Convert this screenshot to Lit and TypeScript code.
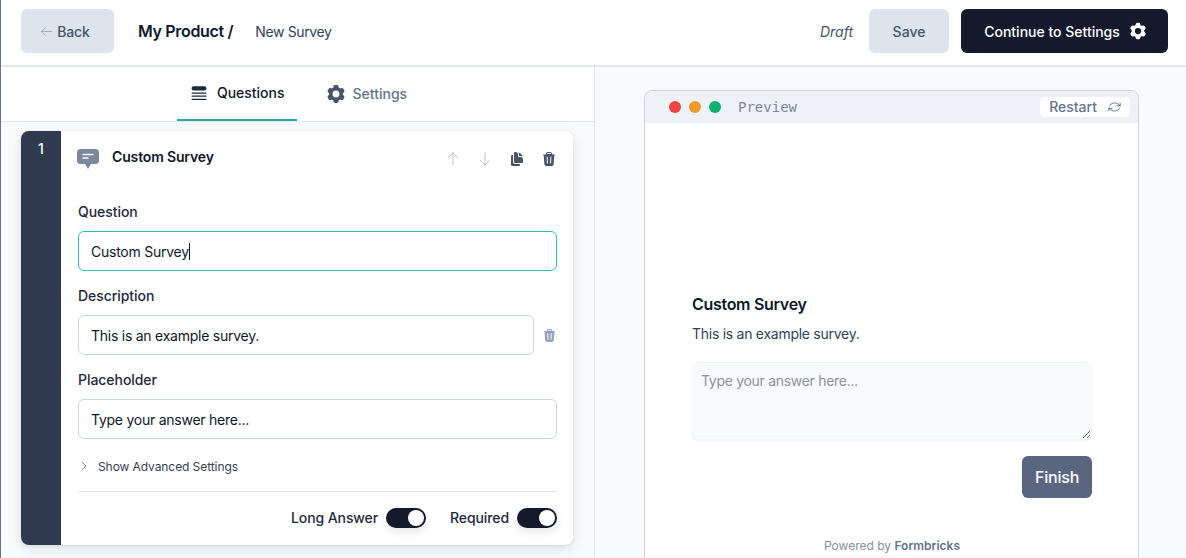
import { LitElement, html, css, svg } from "lit";
import { customElement } from "lit/decorators.js";

const solid = (paths: any, size: number, cls = "") => html`
    <svg class=${cls} width=${size} height=${size} viewBox="0 0 24 24" fill="currentColor">${paths}</svg>
`;
const outline = (d: string, size: number, width = 1.5, cls = "") => html`
    <svg class=${cls} width=${size} height=${size} viewBox="0 0 24 24" fill="none" stroke="currentColor"
        stroke-width=${width} stroke-linecap="round" stroke-linejoin="round">
        ${svg`<path d=${d}></path>`}
    </svg>
`;

const cog = svg`<path fill-rule="evenodd" clip-rule="evenodd" d="M11.078 2.25c-.917 0-1.699.663-1.85 1.567L9.05 4.889c-.02.12-.115.26-.297.348a7.493 7.493 0 00-.986.57c-.166.115-.334.126-.45.083L6.3 5.508a1.875 1.875 0 00-2.282.819l-.922 1.597a1.875 1.875 0 00.432 2.385l.84.692c.095.078.17.229.154.43a7.598 7.598 0 000 1.139c.015.2-.059.352-.153.43l-.841.692a1.875 1.875 0 00-.432 2.385l.922 1.597a1.875 1.875 0 002.282.818l1.019-.382c.115-.043.283-.031.45.082.312.214.641.405.985.57.182.088.277.228.297.35l.178 1.071c.151.904.933 1.567 1.85 1.567h1.844c.916 0 1.699-.663 1.85-1.567l.178-1.072c.02-.12.114-.26.297-.349.344-.165.673-.356.985-.57.167-.114.335-.125.45-.082l1.02.382a1.875 1.875 0 002.28-.819l.923-1.597a1.875 1.875 0 00-.432-2.385l-.84-.692c-.095-.078-.17-.229-.154-.43a7.614 7.614 0 000-1.139c-.016-.2.059-.352.153-.43l.84-.692c.708-.582.891-1.59.433-2.385l-.922-1.597a1.875 1.875 0 00-2.282-.818l-1.02.382c-.114.043-.282.031-.449-.083a7.49 7.49 0 00-.985-.57c-.183-.087-.277-.227-.297-.348l-.179-1.072a1.875 1.875 0 00-1.85-1.567h-1.843zM12 15.75a3.75 3.75 0 100-7.5 3.75 3.75 0 000 7.5z"></path>`;
const trash = svg`<path fill-rule="evenodd" clip-rule="evenodd" d="M16.5 4.478v.227a48.816 48.816 0 013.878.512.75.75 0 11-.256 1.478l-.209-.035-1.005 13.07a3 3 0 01-2.991 2.77H8.084a3 3 0 01-2.991-2.77L4.087 6.66l-.209.035a.75.75 0 01-.256-1.478A48.567 48.567 0 017.5 4.705v-.227c0-1.564 1.213-2.9 2.816-2.951a52.662 52.662 0 013.369 0c1.603.051 2.815 1.387 2.815 2.951zm-6.136-1.452a51.196 51.196 0 013.273 0C14.39 3.05 15 3.684 15 4.478v.113a49.488 49.488 0 00-6 0v-.113c0-.794.609-1.428 1.364-1.452zm-.355 5.945a.75.75 0 10-1.5.058l.347 9a.75.75 0 101.499-.058l-.346-9zm5.48.058a.75.75 0 10-1.498-.058l-.347 9a.75.75 0 001.5.058l.345-9z"></path>`;
const copy = svg`<path d="M7.5 3.375c0-1.036.84-1.875 1.875-1.875h.375a3.75 3.75 0 013.75 3.75v1.875C13.5 8.161 14.34 9 15.375 9h1.875A3.75 3.75 0 0121 12.75v3.375C21 17.16 20.16 18 19.125 18h-9.75A1.875 1.875 0 017.5 16.125V3.375z"></path><path d="M15 5.25a5.23 5.23 0 00-1.279-3.434 9.768 9.768 0 016.963 6.963A5.23 5.23 0 0017.25 7.5h-1.875A.375.375 0 0115 7.125V5.25zM4.875 6H6v10.125A3.375 3.375 0 009.375 19.5H16.5v1.125c0 1.035-.84 1.875-1.875 1.875h-9.75A1.875 1.875 0 013 20.625V7.875C3 6.839 3.84 6 4.875 6z"></path>`;
const queue = svg`<path d="M5.625 3.75a2.625 2.625 0 100 5.25h12.75a2.625 2.625 0 000-5.25H5.625zM3.75 11.25a.75.75 0 000 1.5h16.5a.75.75 0 000-1.5H3.75zM3 15.75a.75.75 0 01.75-.75h16.5a.75.75 0 010 1.5H3.75a.75.75 0 01-.75-.75zM3.75 18.75a.75.75 0 000 1.5h16.5a.75.75 0 000-1.5H3.75z"></path>`;

@customElement("app-root")
export class AppRoot extends LitElement {
    static styles = css`
        :host {
            display: flex;
            flex-direction: column;
            height: 558px;
            overflow: hidden;
            font-family: Inter, "Liberation Sans", sans-serif;
            color: #0f172a;
            background: #fff;
            border-left: 1px solid #64748b;
        }
        svg {
            display: block;
            flex: none;
        }
        .topbar {
            display: flex;
            align-items: center;
            padding: 9px 18px 12px 20px;
            border-bottom: 2px solid #e2e8f0;
            flex: none;
        }
        .btn {
            display: flex;
            align-items: center;
            justify-content: center;
            height: 44px;
            box-sizing: border-box;
            border-radius: 6px;
            font-size: 14px;
            font-weight: 500;
        }
        .btn.soft {
            background: #dde4ee;
            color: #475569;
        }
        .btn.dark {
            background: #141a2b;
            color: #fff;
            width: 207px;
            gap: 8px;
            margin-left: 12px;
            padding-left: 3px;
        }
        .back {
            width: 93px;
            gap: 4px;
            padding-right: 5px;
            letter-spacing: -0.1px;
        }
        .back svg {
            color: #94a3b8;
        }
        .save {
            width: 80px;
            margin-left: 16px;
        }
        .product {
            margin-left: 24px;
            font-size: 16px;
            font-weight: 600;
            letter-spacing: -0.33px;
        }
        .survey-name {
            margin-left: 22px;
            font-size: 14px;
            color: #334155;
            padding-top: 1px;
            letter-spacing: -0.38px;
        }
        .draft {
            margin-left: auto;
            font-size: 14px;
            font-style: italic;
            color: #475569;
        }
        .main {
            flex: 1;
            display: flex;
            min-height: 0;
        }
        .editor {
            width: 593px;
            flex: none;
            border-right: 1px solid #e2e8f0;
            background: #f8fafc;
        }
        .tabs {
            display: flex;
            justify-content: center;
            height: 54px;
            padding-left: 3px;
            background: #fff;
            border-bottom: 1px solid #e2e8f0;
        }
        .tab {
            display: flex;
            align-items: center;
            box-sizing: border-box;
            font-size: 14px;
            font-weight: 500;
            color: #64748b;
            border-bottom: 2px solid transparent;
        }
        .tab.active {
            gap: 8px;
            padding: 0 12px 1px 12px;
            color: #0f172a;
            border-bottom-color: #2ba8a0;
        }
        .tab.idle {
            gap: 6px;
            margin-left: 14px;
            padding: 1px 14px 0;
        }
        .tab svg {
            color: #475569;
        }
        .tab.active svg {
            color: #1e293b;
        }
        .card {
            display: flex;
            width: 552px;
            height: 414px;
            margin: 9px 0 0 20px;
            border-radius: 8px;
            overflow: hidden;
            background: #fff;
            box-shadow: 0 4px 12px rgba(15, 23, 42, 0.1), 0 1px 3px rgba(15, 23, 42, 0.08);
        }
        .index {
            width: 40px;
            flex: none;
            background: #2f3a4f;
            color: #fff;
            font-size: 14px;
            font-weight: 500;
            text-align: center;
            padding-top: 9px;
            box-sizing: border-box;
        }
        .body {
            flex: 1;
            padding: 0 16px 0 17px;
            min-width: 0;
        }
        .card-head {
            display: flex;
            align-items: center;
            height: 54px;
            margin-left: -1px;
        }
        .card-title {
            margin-left: 13px;
            font-size: 14px;
            font-weight: 600;
            margin-top: -3px;
            letter-spacing: -0.15px;
        }
        .tools {
            margin-left: auto;
            margin-top: 2px;
            display: flex;
            align-items: center;
            gap: 16px;
            color: #bcc6d3;
        }
        .tools .on {
            color: #475569;
        }
        .bubble {
            color: #7a879c;
            margin-top: 2px;
        }
        .label {
            font-size: 14px;
            font-weight: 500;
            line-height: 20px;
            color: #1e293b;
            margin-bottom: 9px;
            letter-spacing: -0.05px;
        }
        .label.first {
            margin-top: 17px;
        }
        .group {
            margin-bottom: 15px;
        }
        .row {
            display: flex;
            align-items: center;
            gap: 8px;
        }
        .row > svg {
            color: #94a3b8;
        }
        .field {
            flex: 1;
            display: flex;
            align-items: center;
            height: 40px;
            padding: 0 12px;
            box-sizing: border-box;
            border: 1px solid #cbd5e1;
            border-radius: 6px;
            font-size: 14px;
            color: #0f172a;
            letter-spacing: -0.25px;
        }
        .field.focus {
            border-color: #2dbfb0;
        }
        .caret {
            width: 1px;
            height: 17px;
            background: #0f172a;
        }
        .advanced {
            display: flex;
            align-items: center;
            gap: 8px;
            height: 18px;
            margin: 18px 0 16px;
            font-size: 12px;
            color: #334155;
            letter-spacing: -0.08px;
        }
        .advanced svg {
            color: #475569;
        }
        .switches {
            display: flex;
            justify-content: flex-end;
            align-items: center;
            height: 51px;
            padding-bottom: 1px;
            border-top: 1px solid #e2e8f0;
            font-size: 14px;
            font-weight: 500;
            color: #1e293b;
            letter-spacing: -0.1px;
        }
        .switch {
            width: 40px;
            height: 20px;
            margin-left: 8px;
            border-radius: 10px;
            background: #141a2b;
            display: flex;
            justify-content: flex-end;
            align-items: center;
            padding: 2px;
            box-sizing: border-box;
            box-shadow: 0 4px 10px rgba(15, 23, 42, 0.1);
        }
        .switch::after {
            content: "";
            width: 16px;
            height: 16px;
            border-radius: 50%;
            background: #fff;
        }
        .switch-name {
            margin-left: 24px;
        }
        .preview {
            flex: 1;
            min-width: 0;
            background: #f8fafc;
            padding: 23px 47px 0 49px;
        }
        .frame {
            height: 520px;
            box-sizing: border-box;
            background: #fff;
            border: 1px solid #cbd5e1;
            border-radius: 8px;
            overflow: hidden;
        }
        .frame-bar {
            display: flex;
            align-items: center;
            height: 32px;
            padding: 0 8px 0 24px;
            background: #eef1f6;
        }
        .dot {
            width: 12px;
            height: 12px;
            border-radius: 50%;
            margin-right: 8px;
        }
        .dot.red {
            background: #ef4444;
        }
        .dot.amber {
            background: #f2992e;
        }
        .dot.green {
            background: #10b070;
        }
        .frame-name {
            margin-left: 9px;
            font-family: "DejaVu Sans Mono", "Liberation Mono", monospace;
            font-size: 14px;
            color: #7c8aa0;
        }
        .restart {
            margin-left: auto;
            display: flex;
            align-items: center;
            gap: 10px;
            height: 20px;
            padding: 0 8px 1px 9px;
            box-sizing: border-box;
            background: #fff;
            border-radius: 5px;
            font-size: 14px;
            font-weight: 500;
            color: #64748b;
        }
        .form {
            padding: 171px 46px 0 47px;
        }
        .form h3 {
            margin: 0;
            font-size: 16px;
            line-height: 20px;
            font-weight: 600;
            color: #0f172a;
            letter-spacing: -0.3px;
        }
        .form p {
            margin: 10px 0 0;
            font-size: 14px;
            line-height: 20px;
            color: #334155;
            letter-spacing: -0.27px;
        }
        textarea {
            display: block;
            width: 100%;
            height: 78px;
            margin-top: 18px;
            padding: 8px;
            box-sizing: border-box;
            border: 1px solid #f1f5f9;
            border-radius: 6px;
            background: #f8fafc;
            font: 14px/20px Inter, "Liberation Sans", sans-serif;
            letter-spacing: -0.3px;
            box-shadow: 0 1px 2px rgba(15, 23, 42, 0.05);
        }
        textarea::placeholder {
            color: #8c93a3;
        }
        .actions {
            display: flex;
            justify-content: flex-end;
            margin-top: 16px;
        }
        .finish {
            width: 70px;
            height: 42px;
            display: flex;
            align-items: center;
            justify-content: center;
            border-radius: 6px;
            background: #5a6680;
            color: #fff;
            font-size: 16px;
            font-weight: 500;
            letter-spacing: -0.2px;
        }
        .powered {
            margin-top: 40px;
            text-align: center;
            font-size: 12px;
            color: #8591a5;
        }
        .powered b {
            font-weight: 600;
            color: #64748b;
        }
    `;

    render() {
        return html`
            <header class="topbar">
                <div class="btn soft back">
                    ${outline("M10.5 19.5L3 12m0 0l7.5-7.5M3 12h18", 13)}
                    <span>Back</span>
                </div>
                <div class="product">My Product /</div>
                <div class="survey-name">New Survey</div>
                <div class="draft">Draft</div>
                <div class="btn soft save">Save</div>
                <div class="btn dark">
                    <span>Continue to Settings</span>
                    ${solid(cog, 20)}
                </div>
            </header>
            <div class="main">
                <section class="editor">
                    <nav class="tabs">
                        <div class="tab active">${solid(queue, 20)}<span>Questions</span></div>
                        <div class="tab idle">${solid(cog, 22)}<span>Settings</span></div>
                    </nav>
                    <article class="card">
                        <div class="index">1</div>
                        <div class="body">
                            <div class="card-head">
                                <svg class="bubble" width="22" height="22" viewBox="0 0 22 22">
                                    <path fill="currentColor" d="M3.5 1h15A3.5 3.5 0 0122 4.500v8A3.500 3.500 0 0118.500 16H14l-3 5-3-5H3.500A3.500 3.500 0 010 12.500v-8A3.500 3.500 0 013.500 1z"></path>
                                    <path stroke="#fff" stroke-width="1.500" stroke-linecap="round" d="M6 6.500h10M6 10h5"></path>
                                </svg>
                                <div class="card-title">Custom Survey</div>
                                <div class="tools">
                                    ${outline("M4.5 10.5L12 3m0 0l7.5 7.5M12 3v18", 16)}
                                    ${outline("M19.5 13.5L12 21m0 0l-7.5-7.5M12 21V3", 16)}
                                    ${solid(copy, 16, "on")}
                                    ${solid(trash, 16, "on")}
                                </div>
                            </div>
                            <div class="label first">Question</div>
                            <div class="group">
                                <div class="field focus">Custom Survey<span class="caret"></span></div>
                            </div>
                            <div class="label">Description</div>
                            <div class="group row">
                                <div class="field">This is an example survey.</div>
                                ${solid(trash, 15)}
                            </div>
                            <div class="label">Placeholder</div>
                            <div class="field">Type your answer here...</div>
                            <div class="advanced">
                                ${outline("M8.250 4.500l7.500 7.500-7.500 7.500", 12)}
                                <span>Show Advanced Settings</span>
                            </div>
                            <div class="switches">
                                <span>Long Answer</span>
                                <div class="switch"></div>
                                <span class="switch-name">Required</span>
                                <div class="switch"></div>
                            </div>
                        </div>
                    </article>
                </section>
                <section class="preview">
                    <div class="frame">
                        <div class="frame-bar">
                            <span class="dot red"></span>
                            <span class="dot amber"></span>
                            <span class="dot green"></span>
                            <span class="frame-name">Preview</span>
                            <div class="restart">
                                <span>Restart</span>
                                <svg width="15" height="12" viewBox="0 0 24 24" preserveAspectRatio="none" fill="none"
                                    stroke="currentColor" stroke-width="1.6" stroke-linecap="round" stroke-linejoin="round">
                                    <path d="M16.023 9.348h4.992v-.001M2.985 19.644v-4.992m0 0h4.992m-4.993 0l3.181 3.183a8.250 8.250 0 0013.803-3.700M4.031 9.865a8.250 8.250 0 0113.803-3.700l3.181 3.182m0-4.991v4.990"></path>
                                </svg>
                            </div>
                        </div>
                        <div class="form">
                            <h3>Custom Survey</h3>
                            <p>This is an example survey.</p>
                            <textarea placeholder="Type your answer here..."></textarea>
                            <div class="actions"><div class="finish">Finish</div></div>
                            <div class="powered">Powered by <b>Formbricks</b></div>
                        </div>
                    </div>
                </section>
            </div>
        `;
    }
}
